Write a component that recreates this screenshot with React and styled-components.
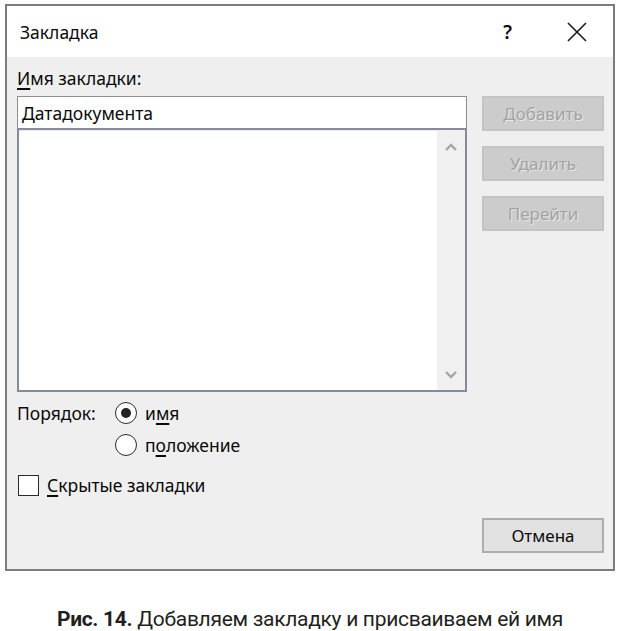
import React, { useState } from "react";
import styled, { createGlobalStyle } from "styled-components";

const GlobalStyle = createGlobalStyle`
  html, body {
    margin: 0;
    padding: 0;
    background: #ffffff;
  }
  body {
    width: 623px;
    height: 631px;
    overflow: hidden;
    font-family: "Noto Sans", "Open Sans", sans-serif;
  }
`;

function App() {
  const [order, setOrder] = useState("name");
  const [hidden, setHidden] = useState(false);

  return (
    <Page>
      <GlobalStyle />
      <Dialog>
        <TitleBar>
          <Title>Закладка</Title>
          <TitleButtons>
            <Help>?</Help>
            <CloseBtn>
              <svg width="20" height="20" viewBox="0 0 20 20">
                <path d="M1 1 L19 19 M19 1 L1 19" stroke="#1a1a1a" strokeWidth="1.6" fill="none" />
              </svg>
            </CloseBtn>
          </TitleButtons>
        </TitleBar>
        <Body>
          <TopRow>
            <FieldColumn>
              <Label><u>И</u>мя закладки:</Label>
              <NameInput>Датадокумента</NameInput>
              <ListBox>
                <ListArea />
                <ScrollBar>
                  <svg width="14" height="10" viewBox="0 0 14 10">
                    <path d="M2 8 L7 3 L12 8" stroke="#a6a6a6" strokeWidth="2.4" fill="none" />
                  </svg>
                  <svg width="14" height="10" viewBox="0 0 14 10">
                    <path d="M2 2 L7 7 L12 2" stroke="#a6a6a6" strokeWidth="2.4" fill="none" />
                  </svg>
                </ScrollBar>
              </ListBox>
            </FieldColumn>
            <ButtonColumn>
              <Button disabled>Добавить</Button>
              <Button disabled>Удалить</Button>
              <Button disabled>Перейти</Button>
            </ButtonColumn>
          </TopRow>

          <OrderRow>
            <OrderLabel>Порядок:</OrderLabel>
            <RadioList>
              <Option onClick={() => setOrder("name")}>
                <Radio $checked={order === "name"} />
                <span>и<u>м</u>я</span>
              </Option>
              <Option onClick={() => setOrder("position")}>
                <Radio $checked={order === "position"} />
                <span>п<u>о</u>ложение</span>
              </Option>
            </RadioList>
          </OrderRow>

          <CheckRow onClick={() => setHidden(!hidden)}>
            <CheckBox $checked={hidden} />
            <span><u>С</u>крытые закладки</span>
          </CheckRow>

          <Footer>
            <Button>Отмена</Button>
          </Footer>
        </Body>
      </Dialog>
      <Caption>
        <b>Рис. 14.</b> Добавляем закладку и присваиваем ей имя
      </Caption>
    </Page>
  );
}

const Page = styled.div`
  display: flex;
  flex-direction: column;
  padding: 4px 0 0 5px;
`;

const Dialog = styled.div`
  width: 610px;
  height: 567px;
  box-sizing: border-box;
  border: 2px solid #7c7c7c;
  display: flex;
  flex-direction: column;
  color: #0a0a0a;
  font-size: 17.5px;
`;

const TitleBar = styled.div`
  height: 51px;
  background: #ffffff;
  display: flex;
  align-items: center;
  justify-content: space-between;
  padding: 0 26px 0 13px;
`;

const Title = styled.div`
  font-size: 17.5px;
  margin-top: 1px;
`;

const TitleButtons = styled.div`
  display: flex;
  align-items: center;
  gap: 55px;
`;

const Help = styled.div`
  font-size: 19px;
  font-weight: 600;
  margin-top: 1px;
`;

const CloseBtn = styled.div`
  display: flex;
  width: 20px;
  height: 20px;
`;

const Body = styled.div`
  flex: 1;
  background: #efefef;
  padding: 10px 9px 0 10px;
  display: flex;
  flex-direction: column;
`;

const TopRow = styled.div`
  display: flex;
  gap: 15px;
`;

const FieldColumn = styled.div`
  width: 450px;
  display: flex;
  flex-direction: column;
`;

const Label = styled.div`
  height: 29px;
  line-height: 22px;
  u {
    text-decoration-thickness: 1.5px;
    text-underline-offset: 3px;
  }
`;

const NameInput = styled.div`
  height: 32px;
  box-sizing: border-box;
  border: 1px solid #8f8f8f;
  border-bottom: none;
  background: #fff;
  padding: 0 4px;
  display: flex;
  align-items: center;
`;

const ListBox = styled.div`
  height: 264px;
  box-sizing: border-box;
  border: 2px solid #848c97;
  background: #fff;
  display: flex;
`;

const ListArea = styled.div`
  flex: 1;
  border-top: 1px solid #e9eaec;
`;

const ScrollBar = styled.div`
  width: 28px;
  background: #f0f0f0;
  display: flex;
  flex-direction: column;
  align-items: center;
  justify-content: space-between;
  padding: 12px 0 10px;
`;

const ButtonColumn = styled.div`
  width: 122px;
  padding-top: 29px;
  display: flex;
  flex-direction: column;
  gap: 15px;
`;

const Button = styled.button`
  width: 122px;
  height: 35px;
  box-sizing: border-box;
  font-family: "Noto Sans", "Open Sans", sans-serif;
  font-size: 17px;
  padding: 0;
  border: 2px solid ${(p) => (p.disabled ? "#c4c4c4" : "#adadad")};
  background: ${(p) => (p.disabled ? "#cccccc" : "#e1e1e1")};
  color: ${(p) => (p.disabled ? "#a3a3a3" : "#0a0a0a")};
  text-shadow: ${(p) => (p.disabled ? "1px 1px 0 #e8e8e8" : "none")};
`;

const OrderRow = styled.div`
  display: flex;
  margin-top: 10px;
`;

const OrderLabel = styled.div`
  width: 98px;
  line-height: 22px;
`;

const RadioList = styled.div`
  display: flex;
  flex-direction: column;
  gap: 10px;
`;

const Option = styled.div`
  display: flex;
  align-items: center;
  gap: 8px;
  line-height: 22px;
  cursor: default;
  u {
    text-decoration-thickness: 1.5px;
    text-underline-offset: 3px;
  }
`;

const Radio = styled.span`
  width: 22px;
  height: 22px;
  box-sizing: border-box;
  border-radius: 50%;
  border: 1.6px solid #2a2a2a;
  background: #fff;
  display: flex;
  align-items: center;
  justify-content: center;
  &::after {
    content: "";
    width: 10px;
    height: 10px;
    border-radius: 50%;
    background: ${(p) => (p.$checked ? "#222" : "transparent")};
  }
`;

const CheckRow = styled.div`
  display: flex;
  align-items: center;
  gap: 8px;
  margin-top: 18px;
  padding-left: 1px;
  line-height: 22px;
  u {
    text-decoration-thickness: 1.5px;
    text-underline-offset: 3px;
  }
`;

const CheckBox = styled.span`
  width: 21px;
  height: 21px;
  box-sizing: border-box;
  border: 1.6px solid #2a2a2a;
  background: #fff;
`;

const Footer = styled.div`
  display: flex;
  justify-content: flex-end;
  margin-top: 22px;
`;

const Caption = styled.div`
  width: 610px;
  margin-top: 36px;
  text-align: center;
  font-family: "Roboto", "Liberation Sans", sans-serif;
  font-size: 21px;
  color: #231f20;
  letter-spacing: -0.3px;
  b {
    font-weight: 700;
  }
`;

export default App;
